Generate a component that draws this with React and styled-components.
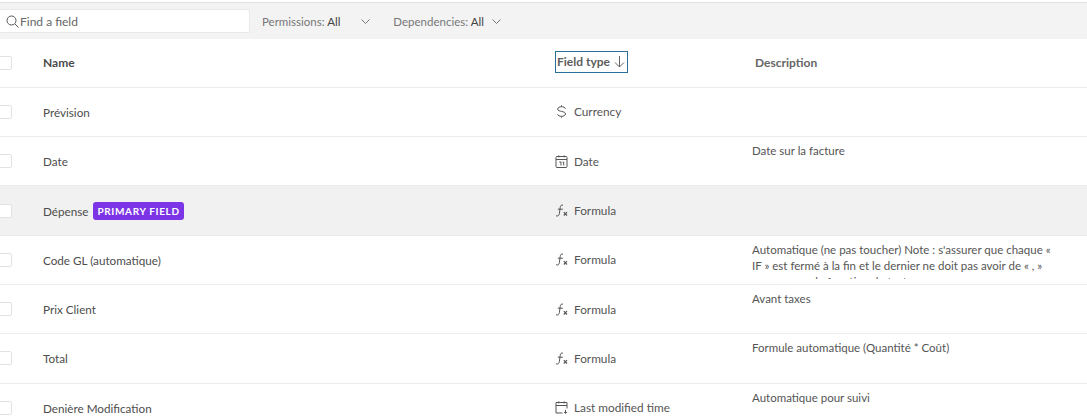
import React from 'react';
import styled, { createGlobalStyle } from 'styled-components';

const GlobalStyle = createGlobalStyle`
  html, body {
    margin: 0;
    padding: 0;
    background: #fff;
    overflow: hidden;
  }
  body {
    font-family: Lato, "Open Sans", sans-serif;
    color: #4a4a4a;
  }
`;

const Page = styled.div`
  width: 1087px;
  height: 419px;
  overflow: hidden;
  padding-top: 2px;
  box-sizing: border-box;
`;

const Toolbar = styled.div`
  height: 36.5px;
  box-sizing: border-box;
  padding-top: 1px;
  border-top: 1px solid #e1e1e1;
  background: #f3f3f3;
  display: flex;
  align-items: center;
`;

const SearchBox = styled.div`
  width: 251px;
  height: 24px;
  margin-left: -1px;
  box-sizing: border-box;
  background: #fff;
  border: 1px solid #e8e8e8;
  border-radius: 2px;
  display: flex;
  align-items: center;
  gap: 1px;
  padding-left: 6px;
  font-size: 12px;
  color: #666;
`;

const Filter = styled.div`
  display: flex;
  align-items: center;
  margin-left: ${(props) => props.$left}px;
  font-size: 11.5px;
  color: #777;
  gap: ${(props) => props.$gap}px;

  b {
    font-weight: 400;
    color: #444;
  }
`;

const Row = styled.div`
  height: 49.3px;
  box-sizing: border-box;
  display: grid;
  grid-template-columns: 43px 513px 196px 1fr;
  grid-template-rows: 100%;
  border-bottom: 1px solid #ececec;
  background: ${(props) => (props.$active ? '#f1f1f1' : '#fff')};
  overflow: hidden;
`;

const CheckCell = styled.div`
  display: flex;
  align-items: center;
`;

const Check = styled.span`
  display: block;
  width: 20px;
  height: 14px;
  margin-left: -8px;
  box-sizing: border-box;
  background: #fff;
  border: 1px solid #e2e2e2;
  border-radius: 2px;
`;

const NameCell = styled.div`
  display: flex;
  align-items: center;
  gap: 5px;
  padding-bottom: ${(props) => (props.$head ? 1 : 0)}px;
  font-size: ${(props) => (props.$head ? 12 : 11.7)}px;
  color: #4d4d4d;
  font-weight: ${(props) => (props.$head ? 700 : 400)};
`;

const Badge = styled.span`
  background: #7c35e6;
  color: #fff;
  border-radius: 3px;
  height: 18px;
  line-height: 18px;
  padding: 0 4px;
  font-size: 10px;
  font-weight: 700;
  letter-spacing: 0.65px;
`;

const TypeCell = styled.div`
  display: flex;
  align-items: center;
  gap: 6px;
  font-size: 11.8px;
  color: #555;

  svg {
    margin-left: -1px;
  }
`;

const SortedHead = styled.div`
  display: flex;
  align-items: center;
  gap: 3px;
  height: 22px;
  width: 73px;
  margin-left: -1px;
  padding-left: 1px;
  box-sizing: border-box;
  border: 1px solid #2a6f97;
  font-size: 12px;
  font-weight: 700;
  color: #5e5e5e;
  white-space: nowrap;
`;

const HeadCell = styled.div`
  display: flex;
  align-items: center;
  padding-bottom: 2px;
`;

const DescHead = styled.div`
  display: flex;
  align-items: center;
  padding-left: 3px;
  padding-bottom: 1px;
  font-size: 12px;
  font-weight: 700;
  color: #666;
`;

const DescCell = styled.div`
  margin-top: 6px;
  width: 308px;
  max-height: 37px;
  overflow: hidden;
  font-size: 11.5px;
  line-height: 16px;
  color: #555;
`;

const IconBox = styled.svg`
  width: 13px;
  height: 13px;
  flex: none;
  fill: none;
  stroke: #555;
  stroke-width: 1;
`;

const SearchIcon = () => (
  <IconBox viewBox="0 0 13 13">
    <circle cx="5.500" cy="5.500" r="4.500" />
    <path d="M9 9l3.500 3.500" />
  </IconBox>
);

const Chevron = () => (
  <IconBox viewBox="0 0 13 13">
    <path d="M2.500 4.500l4 4 4-4" stroke="#777" />
  </IconBox>
);

const ArrowDown = () => (
  <IconBox viewBox="0 0 13 13">
    <path d="M6.500 1v11M2 7.500l4.500 4.500 4.500-4.500" stroke="#666" />
  </IconBox>
);

const CurrencyIcon = () => (
  <IconBox viewBox="0 0 13 13">
    <path d="M10.500 3.700C10 2.300 8.300 1.700 6.500 1.700 4.500 1.700 2.700 2.500 2.700 4c0 3.200 7.800 1.600 7.800 5 0 1.500-1.900 2.300-4 2.300-1.800 0-3.500-.6-4-2M6.500 .3v1.400M6.500 11.300v1.400" />
  </IconBox>
);

const CalendarIcon = () => (
  <IconBox viewBox="0 0 13 13">
    <rect x="1" y="1.500" width="11" height="11" rx="1" />
    <path d="M1 4.500h11M3.800 .4v2M9.200 .4v2M4.300 7h1.700v3.500M7.500 7h1.200v3.500" />
  </IconBox>
);

const FormulaIcon = () => (
  <IconBox viewBox="0 0 13 13">
    <path d="M8 1.200C6.200 .6 5.500 1.600 5.200 3.500L4.400 9.500C4.100 11.600 3 12.400 1 11.800M2.800 5.200h5" />
    <path d="M8.800 8.200l3.200 3.300M12 8.200l-3.200 3.300" strokeWidth="1.200" />
  </IconBox>
);

const ModifiedIcon = () => (
  <IconBox viewBox="0 0 13 13">
    <path d="M7.500 12H1V1.500h11v6M1 4.500h11M3.800 .4v2M9.200 .4v2" />
    <path d="M10.500 8.800v3.600M9 10.900l1.500 1.500 1.500-1.500" />
  </IconBox>
);

const fields = [
  { name: 'Prévision', icon: <CurrencyIcon />, type: 'Currency' },
  { name: 'Date', icon: <CalendarIcon />, type: 'Date', desc: 'Date sur la facture' },
  { name: 'Dépense', primary: true, icon: <FormulaIcon />, type: 'Formula' },
  {
    name: 'Code GL (automatique)',
    icon: <FormulaIcon />,
    type: 'Formula',
    desc: "Automatique (ne pas toucher) Note : s'assurer que chaque « IF » est fermé à la fin et le dernier ne doit pas avoir de « , » sous erreur de fonction de tests",
  },
  { name: 'Prix Client', icon: <FormulaIcon />, type: 'Formula', desc: 'Avant taxes' },
  { name: 'Total', icon: <FormulaIcon />, type: 'Formula', desc: 'Formule automatique (Quantité * Coût)' },
  { name: 'Denière Modification', icon: <ModifiedIcon />, type: 'Last modified time', desc: 'Automatique pour suivi' },
];

export default function App() {
  return (
    <Page>
      <GlobalStyle />
      <Toolbar>
        <SearchBox>
          <SearchIcon />
          Find a field
        </SearchBox>
        <Filter $left={12} $gap={19}>
          <span>
            Permissions: <b>All</b>
          </span>
          <Chevron />
        </Filter>
        <Filter $left={21} $gap={6}>
          <span>
            Dependencies: <b>All</b>
          </span>
          <Chevron />
        </Filter>
      </Toolbar>
      <Row>
        <CheckCell>
          <Check />
        </CheckCell>
        <NameCell $head>Name</NameCell>
        <HeadCell>
          <SortedHead>
            Field type
            <ArrowDown />
          </SortedHead>
        </HeadCell>
        <DescHead>Description</DescHead>
      </Row>
      {fields.map((field) => (
        <Row key={field.name} $active={field.primary}>
          <CheckCell>
            <Check />
          </CheckCell>
          <NameCell>
            {field.name}
            {field.primary && <Badge>PRIMARY FIELD</Badge>}
          </NameCell>
          <TypeCell>
            {field.icon}
            {field.type}
          </TypeCell>
          <DescCell>{field.desc}</DescCell>
        </Row>
      ))}
    </Page>
  );
}
